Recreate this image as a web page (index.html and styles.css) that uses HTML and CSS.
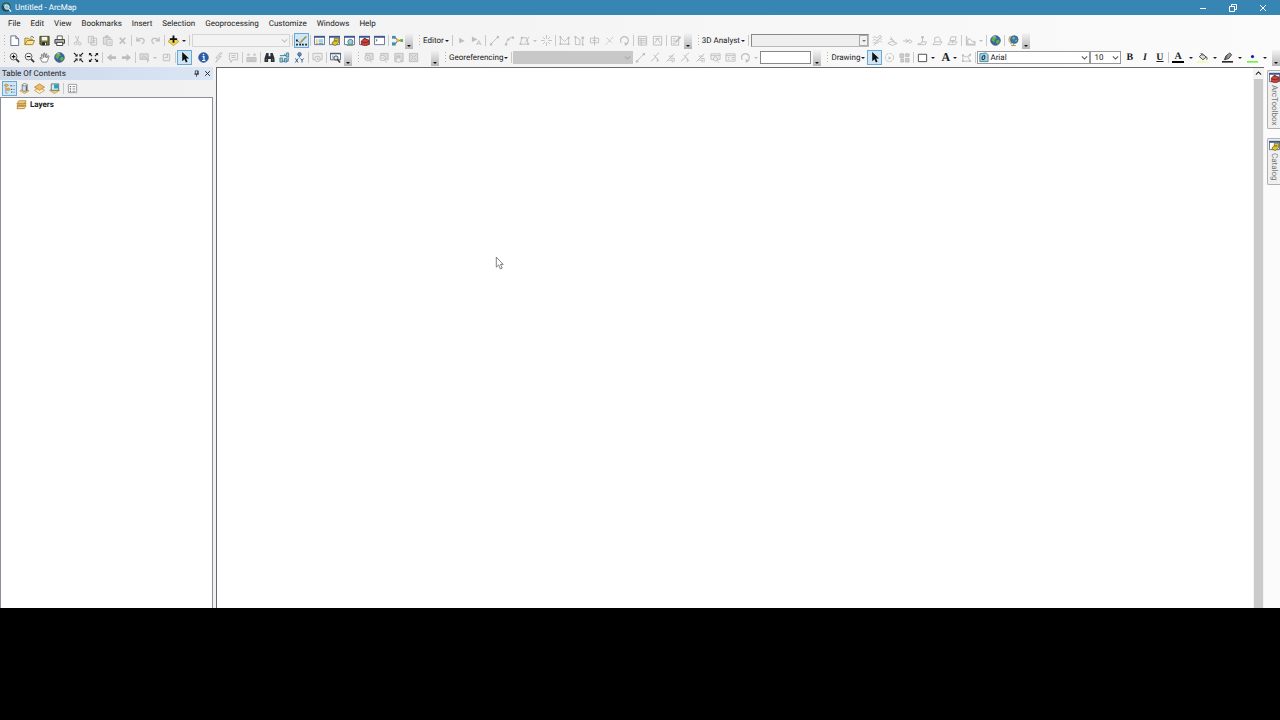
FILE: index.html
```html
<!DOCTYPE html>
<html lang="en">
<head>
    <meta charset="UTF-8">
    <meta name="viewport" content="width=device-width, initial-scale=1.0">
    <title>Untitled - ArcMap</title>
    <link rel="stylesheet" href="styles.css">
</head>
<body>
    <!-- Icon set, 12x12 grid -->
    <svg class="icon-set" aria-hidden="true">
        <symbol id="new" viewBox="0 0 12 12"><path d="M2 1h5.500l3 3v7.500H2z" fill="#fff" stroke="#5c6b86"/><path d="M7.500 1v3h3" fill="#cfdcf0" stroke="#5c6b86"/></symbol>
        <symbol id="open" viewBox="0 0 12 12"><path d="M1 10.500V3.500h3.500l1 1H9v2" fill="#f5dc82" stroke="#9a7f28"/><path d="M1 10.500l2.500-4.500h8L9.500 10.500z" fill="#ffe68c" stroke="#9a7f28"/><path d="M7 2.500c1.500-1.500 3-1 3.500.800" fill="none" stroke="#4a5568"/></symbol>
        <symbol id="save" viewBox="0 0 12 12"><path d="M1 1.500h10v9.500H2L1 10z" fill="#77763a" stroke="#3b3b22"/><path d="M3 2h6v4H3z" fill="#f4f4ec"/><path d="M3.500 8h5v3h-5z" fill="#222"/><path d="M6.500 8.500h1.300V11H6.500z" fill="#eee"/></symbol>
        <symbol id="print" viewBox="0 0 12 12"><path d="M3.500 5V1h5.500v4" fill="#fff" stroke="#555"/><path d="M1 5h10.500v4H1z" fill="#bbb" stroke="#333"/><path d="M3 8h6.500v3.500H3z" fill="#fff" stroke="#333"/><path d="M9 6.300h1.500" stroke="#c9b72a"/></symbol>
        <symbol id="cut" viewBox="0 0 12 12"><path d="M3.500 1l4 7M7.500 1L5 8" stroke="currentColor" fill="none"/><circle cx="4" cy="9" r="1.500" stroke="currentColor" fill="none"/><circle cx="8.500" cy="9.500" r="1.500" stroke="currentColor" fill="none"/></symbol>
        <symbol id="copy" viewBox="0 0 12 12"><path d="M1.500 1.500h5.500v7H1.500zM4.500 3.500h6v7.500h-6z" fill="#eee" stroke="currentColor"/><path d="M6 6h3M6 8h3" stroke="currentColor"/></symbol>
        <symbol id="paste" viewBox="0 0 12 12"><path d="M1.500 2.500h7.500V10H1.500z" fill="#ddd" stroke="currentColor"/><path d="M3.500 1.500h3.500" stroke="currentColor" stroke-width="2"/><path d="M5.500 5h5.500v6.500H5.500z" fill="#f2f2f2" stroke="currentColor"/><path d="M7 7.500h3M7 9.500h3" stroke="currentColor"/></symbol>
        <symbol id="delete" viewBox="0 0 12 12"><path d="M3 3l6 6.500M9 3L3 9.500" stroke="currentColor" stroke-width="1.800"/></symbol>
        <symbol id="undo" viewBox="0 0 12 12"><path d="M2 2.500v4h4M2.500 6C5 2.500 10 3 10 6.500 10 8 9 9 7.500 9.500" fill="none" stroke="currentColor" stroke-width="1.300"/></symbol>
        <symbol id="redo" viewBox="0 0 12 12"><path d="M10 2.500v4H6M9.500 6C7 2.500 2 3 2 6.500 2 8 3 9 4.500 9.500" fill="none" stroke="currentColor" stroke-width="1.300"/></symbol>
        <symbol id="add-data" viewBox="0 0 12 12"><path d="M0 7l6-4 6 4-6 4.500z" fill="#f5d84b" stroke="#b59320" stroke-width=".8"/><path d="M6 .5v8M2 4.500h8" stroke="#111" stroke-width="2"/></symbol>
        <symbol id="editor-bar" viewBox="0 0 12 12"><path d="M1.500 6l3 3L11 1.500" fill="none" stroke="#555" stroke-dasharray="2 1"/><path d="M5 8l6-6" stroke="#a98c4c" stroke-width="1.600"/><path d="M0 9.500h2v2H0zM3.500 9.500h2v2h-2zM6.500 9.500h2v2h-2zM10 9.500h2v2h-2zM0 5h2v2H0z" fill="#222"/></symbol>
        <symbol id="window" viewBox="0 0 12 12"><path d="M.5 1.500h11v9H.5z" fill="#fff" stroke="#5b6f94"/><path d="M0 1h12v2H0z" fill="#3b5690"/></symbol>
        <symbol id="toc" viewBox="0 0 12 12"><use href="#window"/><path d="M2 5.500h2M2 7.500h2M2 9.300h2" stroke="#d29a3a"/><path d="M5 5.500h5M5 7.500h5M5 9.300h5" stroke="#5aa0a8"/></symbol>
        <symbol id="catalog" viewBox="0 0 12 12"><use href="#window"/><path d="M3.500 8l2-1 .5-3.500h4.500v5L7 11.500 3.500 10z" fill="#e0c52a" stroke="#6d6222" stroke-width=".8"/><path d="M6 6.500h3" stroke="#554d15"/></symbol>
        <symbol id="search" viewBox="0 0 12 12"><use href="#window"/><circle cx="7" cy="7.500" r="2.800" fill="#9ccbdc" stroke="#4f7f91"/><path d="M3 11.500h7" stroke="#78a352"/></symbol>
        <symbol id="toolbox" viewBox="0 0 12 12"><use href="#window"/><path d="M2.500 6.500l3-2.500 5.500 1.500V10l-3.500 1.800-5-1.300z" fill="#c9453c" stroke="#7c1d18" stroke-width=".8"/><path d="M4.500 5c1-2 3.500-1.500 3.500.500M3 7.500l4 1 3.500-1.500" fill="none" stroke="#6a1713" stroke-width=".8"/></symbol>
        <symbol id="python" viewBox="0 0 12 12"><use href="#window"/><path d="M2 4.800l1.500 1L2 6.800" fill="none" stroke="#333" stroke-width=".8"/></symbol>
        <symbol id="model" viewBox="0 0 12 12"><path d="M2 3h2l2 3H9M2 9.500h2L6 6" fill="none" stroke="#555"/><path d="M0 1h4v3H0z" fill="#3f8fb5"/><path d="M0 8h4v3.500H0z" fill="#3f8fb5"/><path d="M5 4.500h3v3H5z" fill="#dbb83a"/><path d="M9 4.500h3v3H9z" fill="#5da348"/></symbol>
        <symbol id="play" viewBox="0 0 12 12"><path d="M3.500 3l6 3.500-6 2.500z" fill="currentColor"/></symbol>
        <symbol id="play-a" viewBox="0 0 12 12"><path d="M1 1.500l6 3.500-6 2.500z" fill="currentColor"/><path d="M6 11l2.500-5L11 11M7 9.500h3" fill="none" stroke="currentColor"/></symbol>
        <symbol id="line" viewBox="0 0 12 12"><path d="M2.500 9.500l7-7" stroke="currentColor"/><path d="M1 9h2.500v2.500H1zM8.500 1H11v2.500H8.500z" fill="currentColor"/></symbol>
        <symbol id="arc" viewBox="0 0 12 12"><path d="M2.500 10C3 5 5 3 10 2.500" fill="none" stroke="currentColor"/><path d="M1 9h2.500v2.500H1zM8.500 1.500H11v2.500H8.500zM3.500 4H6v2H3.500z" fill="currentColor"/></symbol>
        <symbol id="poly" viewBox="0 0 12 12"><path d="M1.500 10L3 3h5.500l1.500 7zM7 8l4-6" fill="none" stroke="currentColor"/><path d="M.5 9h2v2h-2zM9 9h2v2H9zM2 2h2v2H2z" fill="currentColor"/></symbol>
        <symbol id="burst" viewBox="0 0 12 12"><path d="M6 0v4M6 8v4M0 6h4M8 6h4M2 2l2.500 2.500M7.500 7.500L10 10M10 2L7.500 4.500M4.500 7.500L2 10" stroke="currentColor"/></symbol>
        <symbol id="reshape" viewBox="0 0 12 12"><path d="M1.500 2v8h9V3L6 7 1.500 2.500" fill="none" stroke="currentColor"/><path d="M.5 1h2v2h-2zM9.500 2h2v2h-2zM.5 9h2v2h-2zM9.500 9h2v2h-2z" fill="currentColor"/></symbol>
        <symbol id="cut-poly" viewBox="0 0 12 12"><path d="M1.500 10.500V2l5 3v5.500zM9.500 4v7" fill="none" stroke="currentColor"/><path d="M.5 1h2v2h-2zM8 2h3v2H8zM8.500 9.500h2v2h-2z" fill="currentColor"/></symbol>
        <symbol id="split-poly" viewBox="0 0 12 12"><path d="M1.500 3.500h9v5h-9zM6 1v10.500M4 6h4" fill="none" stroke="currentColor"/></symbol>
        <symbol id="split" viewBox="0 0 12 12"><path d="M2 10.500l8.500-9M3 3l6 6" stroke="currentColor" stroke-dasharray="3 1"/></symbol>
        <symbol id="rotate" viewBox="0 0 12 12"><path d="M2.500 8.500C0 4 4 1 7.500 2c3.500 1.500 3.500 6 .5 8" fill="none" stroke="currentColor" stroke-width="1.300"/><path d="M6 7.500L6.500 12 10 9.500z" fill="currentColor"/></symbol>
        <symbol id="grid" viewBox="0 0 12 12"><path d="M1.500 1.500h9v9.500h-9zM1.500 4h9M1.500 6.300h9M1.500 8.600h9M4.500 4v7" fill="none" stroke="currentColor"/></symbol>
        <symbol id="sketch" viewBox="0 0 12 12"><path d="M1.500 1.500h9v9.500h-9zM3 9l3-5 3 5M3.500 4h5" fill="none" stroke="currentColor"/></symbol>
        <symbol id="create" viewBox="0 0 12 12"><path d="M1.500 1.500h8v9.500h-8zM3 4h3M3 6.500h3M3 9h3" fill="none" stroke="currentColor"/><path d="M6 8l5.500-6" stroke="currentColor" stroke-width="1.800"/></symbol>
        <symbol id="contour" viewBox="0 0 12 12"><path d="M1 3c2-3 4 2 6-1s3 0 4 0M1 6c2-3 4 2 6-1s3 0 4 0M1 9c2-3 4 2 6-1s3 0 4 0M2 11.500l8-10" fill="none" stroke="currentColor"/></symbol>
        <symbol id="steep" viewBox="0 0 12 12"><path d="M1 9l4-2 6 2-5 2.500zM4 2l3 5M3 5c2-1 4 0 5 3" fill="none" stroke="currentColor"/></symbol>
        <symbol id="sight" viewBox="0 0 12 12"><path d="M1 6.500h5M4 4.500l3 2-3 2M8 5l3 2-2 2-2-2z" fill="none" stroke="currentColor"/></symbol>
        <symbol id="point-z" viewBox="0 0 12 12"><path d="M1 9.500h3l1-2h5.500L9 10.500H1zM6 2v6" fill="none" stroke="currentColor"/><circle cx="6" cy="2.500" r="1.500" fill="currentColor"/></symbol>
        <symbol id="line-z" viewBox="0 0 12 12"><path d="M1 10.500l2-3h8l-2 3zM3 7V3l4-1 2 2v3" fill="none" stroke="currentColor"/></symbol>
        <symbol id="poly-z" viewBox="0 0 12 12"><path d="M1 10.500l2-3h8l-2 3zM3 6l1.500-4H10L9 6zM6 6v3" fill="none" stroke="currentColor"/></symbol>
        <symbol id="profile" viewBox="0 0 12 12"><path d="M1.500 1v10h10M3 10V6l2-2 3 3h3v3z" fill="#ddd" stroke="currentColor"/></symbol>
        <symbol id="globe" viewBox="0 0 12 12"><circle cx="6" cy="6" r="5.200" fill="#3767a4" stroke="#263f66" stroke-width=".8"/><path d="M1.500 6c0-3 3-4.500 5-4l1 2-2 1-1 3zM7 6l3-1 .5 2.500L8 10 6.500 8z" fill="#5fb04a"/><path d="M3 2.500q1.500-1 3-.700" stroke="#b8dcec" fill="none"/></symbol>
        <symbol id="arc-globe" viewBox="0 0 12 12"><path d="M3 1C0 3.500.500 8.500 4.500 10M6 10v1.500M3.500 11.500h5" fill="none" stroke="#b38e25"/><circle cx="6.800" cy="5" r="4.200" fill="#3978b6" stroke="#275484" stroke-width=".8"/><path d="M4 4l2-2.500 2 1.500-1.500 2zM7.500 6l2.500-1-1 3z" fill="#7fbf5c"/></symbol>
        <symbol id="zoom-in" viewBox="0 0 12 12"><path d="M7.500 7.500l3.500 3.500" stroke="#333" stroke-width="1.800"/><circle cx="5" cy="5" r="3.700" fill="#f5f9fc" stroke="#555"/><path d="M5 3v4M3 5h4" stroke="#111" stroke-width="1.200"/></symbol>
        <symbol id="zoom-out" viewBox="0 0 12 12"><path d="M7.500 7.500l3.500 3.500" stroke="#333" stroke-width="1.800"/><circle cx="5" cy="5" r="3.700" fill="#f5f9fc" stroke="#555"/><path d="M3 5h4" stroke="#111" stroke-width="1.200"/></symbol>
        <symbol id="pan" viewBox="0 0 12 12"><path d="M3.500 11L1 6.500l1-.5 1.500 1.500-1-4.500 1-.5L5 6V1.500l1-.5.800 5L7.500 2h1v4.500L10 4l1 .5-1.500 4.500L8.500 11z" fill="#fff" stroke="#666" stroke-width=".8"/></symbol>
        <symbol id="fixed-in" viewBox="0 0 12 12"><path d="M1 1l3 3M11 1L8 4M1 11l3-3M11 11L8 8" stroke="#222" stroke-width="1.300"/><path d="M5 2v3H2zM7 2v3h3zM5 10V7H2zM7 10V7h3z" fill="#222"/></symbol>
        <symbol id="fixed-out" viewBox="0 0 12 12"><path d="M2 2l2.500 2.500M10 2L7.500 4.500M2 10l2.500-2.500M10 10L7.500 7.500" stroke="#222" stroke-width="1.300"/><path d="M1 1h3L1 4zM11 1H8l3 3zM1 11h3L1 8zM11 11H8l3-3z" fill="#222"/></symbol>
        <symbol id="back" viewBox="0 0 12 12"><path d="M1 6l5-4v2.500h5v3H6V10z" fill="currentColor"/></symbol>
        <symbol id="forward" viewBox="0 0 12 12"><path d="M11 6L6 2v2.500H1v3h5V10z" fill="currentColor"/></symbol>
        <symbol id="select-feat" viewBox="0 0 12 12"><path d="M1 2h9v6H1z" fill="#ddd" stroke="currentColor"/><path d="M3 8l2-4 3 3M6 5l5 4-2 .5.5 2" fill="none" stroke="currentColor"/></symbol>
        <symbol id="clear-sel" viewBox="0 0 12 12"><path d="M2.500 2.500h7v7h-7zM7 2.500V6H4" fill="#eee" stroke="currentColor"/></symbol>
        <symbol id="arrow" viewBox="0 0 12 12"><path d="M3.500 0v10L6 7.800l1.500 3.700 1.800-.8L7.800 7.200H11z" fill="#111"/></symbol>
        <symbol id="info" viewBox="0 0 12 12"><circle cx="6" cy="6" r="5.200" fill="#2860ad" stroke="#1c3f77" stroke-width=".8"/><path d="M5 5h1.500v4M4.500 9.200h3.500" stroke="#fff" stroke-width="1.200" fill="none"/><circle cx="6" cy="2.800" r=".9" fill="#fff"/></symbol>
        <symbol id="bolt" viewBox="0 0 12 12"><path d="M7.500 1L3 6.500h2.500L3 11.500 9 5H6.500L10 1z" fill="#e5e5e5" stroke="currentColor" stroke-width=".8"/></symbol>
        <symbol id="popup" viewBox="0 0 12 12"><path d="M1.500 1.500h9v7H5l-2 3v-3H1.500zM3.500 4h5M3.500 6h5" fill="none" stroke="currentColor"/></symbol>
        <symbol id="measure" viewBox="0 0 12 12"><path d="M1 6h10v4.500H1z" fill="#ccc" stroke="currentColor"/><path d="M1.500 3h3M7.500 3h3M3 1.500L1.500 3 3 4.500M9 1.500L10.500 3 9 4.500M4 8v2M6 8v2M8 8v2" fill="none" stroke="currentColor"/></symbol>
        <symbol id="find" viewBox="0 0 12 12"><path d="M2.500 1h2.500v3.500h2V1h2.500L11.500 7v4h-4V7.500h-3V11h-4V7z" fill="#2b3138"/><path d="M2 8.500h1M9 8.500h1" stroke="#aaa"/></symbol>
        <symbol id="route" viewBox="0 0 12 12"><path d="M1 4h6.500M5.500 2l2 2M10 6v4H3" fill="none" stroke="#2a7290"/><path d="M8 1h2.500v4.500H8zM1 6.500h3V11H1zM6 7h2.500v4H6z" fill="#9ec7d8" stroke="#2a7290" stroke-width=".8"/></symbol>
        <symbol id="xy" viewBox="0 0 12 12"><circle cx="6" cy="2.500" r="2" fill="#5c91c5" stroke="#31588a" stroke-width=".7"/><path d="M6 4v2M1.500 7l3 4.500M4.500 7l-3 4.500M7 7l1.800 2L10.500 7M8.800 9v2.500" fill="none" stroke="#29558d"/></symbol>
        <symbol id="time" viewBox="0 0 12 12"><path d="M1 1.500h10v7H1z" fill="#eee" stroke="currentColor"/><circle cx="6" cy="7.500" r="3" fill="#eee" stroke="currentColor"/><path d="M6 6v2h1.500" fill="none" stroke="currentColor"/></symbol>
        <symbol id="viewer" viewBox="0 0 12 12"><path d="M.5 1.500h11v7H.5z" fill="#fff" stroke="#4c5d7c"/><path d="M0 1h12v1.500H0z" fill="#4c5d7c"/><path d="M2 4.500h2M2 6.500h2" stroke="#888"/><circle cx="6.500" cy="6.500" r="2.300" fill="#d7e7f2" stroke="#444"/><path d="M8 8l3 3.500" stroke="#333" stroke-width="1.500"/></symbol>
        <symbol id="page-in" viewBox="0 0 12 12"><path d="M3 1.500h8v7H3z" fill="#ddd" stroke="currentColor"/><circle cx="5" cy="6.500" r="3" fill="#eee" stroke="currentColor"/><path d="M3.500 6.500h3M5 5v3M7 9l2.500 2.500" stroke="currentColor"/></symbol>
        <symbol id="page-out" viewBox="0 0 12 12"><path d="M3 1.500h8v7H3z" fill="#ddd" stroke="currentColor"/><circle cx="5" cy="6.500" r="3" fill="#eee" stroke="currentColor"/><path d="M3.500 6.500h3M7 9l2.500 2.500" stroke="currentColor"/></symbol>
        <symbol id="page-pan" viewBox="0 0 12 12"><path d="M2 1.500h9v9H2z" fill="#ddd" stroke="currentColor"/><path d="M4 11L2 7l2 1V4l1.500 3V3.500L7 7V4l2 3-1 4z" fill="#eee" stroke="currentColor" stroke-width=".8"/></symbol>
        <symbol id="page-full" viewBox="0 0 12 12"><path d="M1.500 1.500h9v9h-9z" fill="#ddd" stroke="currentColor"/><path d="M3 3l2.500 2.500M9 3L6.500 5.500M3 9l2.500-2.500M9 9L6.500 6.500" stroke="currentColor"/></symbol>
        <symbol id="control" viewBox="0 0 12 12"><path d="M1 10l4-3 2-4 3-2M4 3l6 7M8 7v4" fill="none" stroke="currentColor"/></symbol>
        <symbol id="auto-reg" viewBox="0 0 12 12"><path d="M1.500 10.500L10 2M4 4.500h5M6 7h4v4M4 9h4v2.500" fill="none" stroke="currentColor"/></symbol>
        <symbol id="link-table" viewBox="0 0 12 12"><path d="M1 2h10v8H1zM1 4h10M3 6h2M3 8h2M7 6h3M7 8h3" fill="none" stroke="currentColor"/></symbol>
        <symbol id="link-find" viewBox="0 0 12 12"><path d="M1 2h10v6H1zM1 4h10" fill="none" stroke="currentColor"/><circle cx="6" cy="7.500" r="2.300" fill="#eee" stroke="currentColor"/><path d="M7.500 9l2 2.500" stroke="currentColor"/></symbol>
        <symbol id="rotate-el" viewBox="0 0 12 12"><circle cx="6" cy="6" r="4.500" fill="none" stroke="currentColor" stroke-dasharray="3 1"/><path d="M5 4.500v4l3-2z" fill="currentColor"/></symbol>
        <symbol id="align" viewBox="0 0 12 12"><path d="M1 2h4v4H1zM7 2h4v3H7zM2 7.500h3V11H2zM7 7h4v4H7z" fill="#ccc" stroke="currentColor"/></symbol>
        <symbol id="rect" viewBox="0 0 12 12"><path d="M1.500 2.500h9v8h-9z" fill="#fff" stroke="#444"/></symbol>
        <symbol id="vertices" viewBox="0 0 12 12"><path d="M2 10V4l4 1.500L10 3 8 6l2 4z" fill="none" stroke="currentColor"/><path d="M1 2.500h2v2H1zM9 2h2v2H9zM1 9h2v2H1zM9 9h2v2H9z" fill="currentColor"/></symbol>
        <symbol id="fill" viewBox="0 0 12 12"><path d="M2.500 5L6 2l4 3.500-3.500 3z" fill="#ddd" stroke="#444"/><path d="M4 1l2.500 3M9.500 5c1.500.500 2 2 1 3.500" fill="none" stroke="#444"/><path d="M0 10h12v1.500H0z" fill="#f6f7a0"/></symbol>
        <symbol id="pen" viewBox="0 0 12 12"><path d="M3 8.500l1-4L8.500 1l2 2-3 4z" fill="#999" stroke="#333" stroke-width=".9"/><path d="M2 8.500l4-4" stroke="#333"/><path d="M0 10h12v1.500H0z" fill="#000"/></symbol>
        <symbol id="marker" viewBox="0 0 12 12"><circle cx="6" cy="5" r="1.700" fill="#1c1c9c"/><path d="M0 10h12v1.500H0z" fill="#55f01c"/></symbol>
        <symbol id="chevron" viewBox="0 0 12 12"><path d="M2.500 4.500L6 8l3.500-3.500" fill="none" stroke="currentColor" stroke-width="1.400"/></symbol>
        <symbol id="font-tag" viewBox="0 0 12 12"><path d="M2 2l7-1 2 2v7.500H2z" fill="#a9d3e3" stroke="#46859c"/><path d="M7.500 3.500C4 4 3.500 8 5.500 8.500 7.500 8 8 5 7 4" fill="none" stroke="#173f55" stroke-width="1.200"/></symbol>
        <symbol id="list-draw" viewBox="0 0 12 12"><path d="M0 2.500l2.500-1.500L5 2.500 2.500 4zM2 7l2.500-1.500L7 7 4.500 8.500z" fill="#e8b24c" stroke="#bb8327" stroke-width=".7"/><path d="M2 4v7h2" fill="none" stroke="#999"/><path d="M7 3h1.500M8 7h1M8 10h1" stroke="#333" stroke-width="1.300"/><path d="M9.500 3H12M10 7h2M10 10h2" stroke="#7a9cb9"/></symbol>
        <symbol id="list-source" viewBox="0 0 12 12"><path d="M1 8.500L6 6l5 2.500L6 11.500z" fill="#f4cf77" stroke="#b98e3b" stroke-width=".7"/><path d="M3.500 2v6c1 1.300 4.500 1.300 5.500 0V2z" fill="#d7dde8" stroke="#5e6a7c" stroke-width=".8"/><ellipse cx="6.200" cy="2" rx="2.700" ry="1.200" fill="#fff" stroke="#5e6a7c" stroke-width=".8"/><path d="M8 3.500v5" stroke="#3d485a"/></symbol>
        <symbol id="list-visible" viewBox="0 0 12 12"><path d="M.5 8L6 5l5.500 3L6 11.500z" fill="#fff4d6" stroke="#b98e3b" stroke-width=".8"/><path d="M.5 4.500L6 1l5.500 3.500L6 8z" fill="#efbc62" stroke="#b47c25" stroke-width=".8"/></symbol>
        <symbol id="list-select" viewBox="0 0 12 12"><path d="M.5 8L6 5.500 11.500 8 6 11.500z" fill="#f4cf77" stroke="#b98e3b" stroke-width=".8"/><path d="M2.500 1h8v7h-8z" fill="#d6eef5" stroke="#5b7181"/><path d="M5.500 1.500H10V6H5.500z" fill="#28a3b6"/></symbol>
        <symbol id="options" viewBox="0 0 12 12"><path d="M1.500 1.500h9v9h-9z" fill="#fff" stroke="#9b9b9b"/><path d="M3 4h1.500M3 6.500h1.500M3 9h1.500" stroke="#333"/><path d="M6 4h3M6 6.500h3M6 9h3" stroke="#789"/></symbol>
        <symbol id="layers" viewBox="0 0 12 12"><path d="M1 10.500l2-3.500h8l-2 3.500zM1 8l2-3.500h8L9 8zM1 5.500L3 2h8L9 5.500z" fill="#fbe3ad" stroke="#b8862f"/></symbol>
        <symbol id="pin" viewBox="0 0 12 12"><path d="M4 1.500h5V7H4zM2 7h8M6 7v4.500M8 2v5" fill="none" stroke="#222" stroke-width="1.200"/></symbol>
        <symbol id="cross" viewBox="0 0 12 12"><path d="M2 2l8 8M10 2l-8 8" stroke="currentColor" stroke-width="1.600"/></symbol>
        <symbol id="close" viewBox="0 0 12 12"><path d="M3 3l6 6M9 3L3 9" stroke="currentColor"/></symbol>
        <symbol id="minimize" viewBox="0 0 12 12"><path d="M3 6.500h6" stroke="currentColor"/></symbol>
        <symbol id="restore" viewBox="0 0 12 12"><path d="M2.500 4.500h5v5h-5zM4.500 4V2.500h5v5H8" fill="none" stroke="currentColor"/></symbol>
        <symbol id="app" viewBox="0 0 12 12"><circle cx="5.500" cy="5.500" r="5" fill="#1c4b5a"/><path d="M2 4c1-2 3-3 5-2L6 4 4 5zM6 6l3-1v3z" fill="#59a588"/><circle cx="6.500" cy="5.500" r="2.500" fill="#8fc6d8" stroke="#e8f2f5"/><path d="M8.500 7.500l2.500 3" stroke="#f1f6f8" stroke-width="1.500"/></symbol>
        <symbol id="cursor" viewBox="0 0 12 16"><path d="M2.500 1v11L5 9.500 7 14l2-1-2-4h3z" fill="#fff" stroke="#555" stroke-width=".8"/></symbol>
    </svg>

    <div class="app">
        <header class="title-bar">
            <svg class="icon"><use href="#app"/></svg>
            <h1>Untitled - ArcMap</h1>
            <div class="window-controls">
                <button title="Minimize"><svg class="icon"><use href="#minimize"/></svg></button>
                <button title="Restore"><svg class="icon"><use href="#restore"/></svg></button>
                <button title="Close"><svg class="icon"><use href="#close"/></svg></button>
            </div>
        </header>

        <nav class="menu-bar">
            <button>File</button>
            <button>Edit</button>
            <button>View</button>
            <button>Bookmarks</button>
            <button>Insert</button>
            <button>Selection</button>
            <button>Geoprocessing</button>
            <button>Customize</button>
            <button>Windows</button>
            <button>Help</button>
        </nav>

        <div class="toolbar-row">
            <!-- Standard -->
            <div class="toolbar standard">
                <button class="tool" title="New"><svg class="icon"><use href="#new"/></svg></button>
                <button class="tool" title="Open"><svg class="icon"><use href="#open"/></svg></button>
                <button class="tool" title="Save"><svg class="icon"><use href="#save"/></svg></button>
                <button class="tool" title="Print"><svg class="icon"><use href="#print"/></svg></button>
                <span class="sep"></span>
                <button class="tool" title="Cut" disabled><svg class="icon"><use href="#cut"/></svg></button>
                <button class="tool" title="Copy" disabled><svg class="icon"><use href="#copy"/></svg></button>
                <button class="tool" title="Paste" disabled><svg class="icon"><use href="#paste"/></svg></button>
                <button class="tool" title="Delete" disabled><svg class="icon"><use href="#delete"/></svg></button>
                <span class="sep"></span>
                <button class="tool" title="Undo" disabled><svg class="icon"><use href="#undo"/></svg></button>
                <button class="tool" title="Redo" disabled><svg class="icon"><use href="#redo"/></svg></button>
                <span class="sep"></span>
                <button class="tool drop" title="Add Data"><svg class="icon"><use href="#add-data"/></svg></button>
                <span class="sep"></span>
                <span class="combo scale"><select aria-label="Map Scale" disabled></select><svg class="icon"><use href="#chevron"/></svg></span>
                <span class="sep"></span>
                <button class="tool active" title="Editor Toolbar"><svg class="icon"><use href="#editor-bar"/></svg></button>
                <span class="sep"></span>
                <button class="tool" title="Table Of Contents"><svg class="icon"><use href="#toc"/></svg></button>
                <button class="tool" title="Catalog"><svg class="icon"><use href="#catalog"/></svg></button>
                <button class="tool" title="Search"><svg class="icon"><use href="#search"/></svg></button>
                <button class="tool" title="ArcToolbox"><svg class="icon"><use href="#toolbox"/></svg></button>
                <button class="tool" title="Python"><svg class="icon"><use href="#python"/></svg></button>
                <span class="sep"></span>
                <button class="tool" title="ModelBuilder"><svg class="icon"><use href="#model"/></svg></button>
                <button class="overflow" title="Toolbar Options"></button>
            </div>

            <!-- Editor -->
            <div class="toolbar">
                <button class="tool-menu">Editor</button>
                <span class="sep"></span>
                <button class="tool" title="Edit Tool" disabled><svg class="icon"><use href="#play"/></svg></button>
                <button class="tool" title="Edit Annotation" disabled><svg class="icon"><use href="#play-a"/></svg></button>
                <span class="sep"></span>
                <button class="tool" title="Straight Segment" disabled><svg class="icon"><use href="#line"/></svg></button>
                <button class="tool" title="Arc Segment" disabled><svg class="icon"><use href="#arc"/></svg></button>
                <button class="tool drop" title="Trace" disabled><svg class="icon"><use href="#poly"/></svg></button>
                <button class="tool" title="Point" disabled><svg class="icon"><use href="#burst"/></svg></button>
                <span class="sep"></span>
                <button class="tool" title="Edit Vertices" disabled><svg class="icon"><use href="#reshape"/></svg></button>
                <button class="tool" title="Reshape" disabled><svg class="icon"><use href="#cut-poly"/></svg></button>
                <button class="tool" title="Cut Polygons" disabled><svg class="icon"><use href="#split-poly"/></svg></button>
                <button class="tool" title="Split" disabled><svg class="icon"><use href="#split"/></svg></button>
                <button class="tool" title="Rotate" disabled><svg class="icon"><use href="#rotate"/></svg></button>
                <span class="sep"></span>
                <button class="tool" title="Attributes" disabled><svg class="icon"><use href="#grid"/></svg></button>
                <button class="tool" title="Sketch Properties" disabled><svg class="icon"><use href="#sketch"/></svg></button>
                <span class="sep"></span>
                <button class="tool" title="Create Features" disabled><svg class="icon"><use href="#create"/></svg></button>
                <button class="overflow" title="Toolbar Options"></button>
            </div>

            <!-- 3D Analyst -->
            <div class="toolbar">
                <button class="tool-menu">3D Analyst</button>
                <span class="sep"></span>
                <span class="combo surface"><select aria-label="Surface layer" disabled></select><i class="box-arrow"></i></span>
                <button class="tool" title="Contour" disabled><svg class="icon"><use href="#contour"/></svg></button>
                <button class="tool" title="Steepest Path" disabled><svg class="icon"><use href="#steep"/></svg></button>
                <button class="tool" title="Line of Sight" disabled><svg class="icon"><use href="#sight"/></svg></button>
                <button class="tool" title="Interpolate Point" disabled><svg class="icon"><use href="#point-z"/></svg></button>
                <button class="tool" title="Interpolate Line" disabled><svg class="icon"><use href="#line-z"/></svg></button>
                <button class="tool" title="Interpolate Polygon" disabled><svg class="icon"><use href="#poly-z"/></svg></button>
                <span class="sep"></span>
                <button class="tool drop" title="Profile Graph" disabled><svg class="icon"><use href="#profile"/></svg></button>
                <span class="sep"></span>
                <button class="tool" title="ArcScene"><svg class="icon"><use href="#globe"/></svg></button>
                <span class="sep"></span>
                <button class="tool" title="ArcGlobe"><svg class="icon"><use href="#arc-globe"/></svg></button>
                <button class="overflow" title="Toolbar Options"></button>
            </div>
        </div>

        <div class="toolbar-row">
            <!-- Tools -->
            <div class="toolbar">
                <button class="tool" title="Zoom In"><svg class="icon"><use href="#zoom-in"/></svg></button>
                <button class="tool" title="Zoom Out"><svg class="icon"><use href="#zoom-out"/></svg></button>
                <button class="tool" title="Pan"><svg class="icon"><use href="#pan"/></svg></button>
                <button class="tool" title="Full Extent"><svg class="icon"><use href="#globe"/></svg></button>
                <span class="sep blank"></span>
                <button class="tool" title="Fixed Zoom In"><svg class="icon"><use href="#fixed-in"/></svg></button>
                <button class="tool" title="Fixed Zoom Out"><svg class="icon"><use href="#fixed-out"/></svg></button>
                <span class="sep"></span>
                <button class="tool" title="Previous Extent" disabled><svg class="icon"><use href="#back"/></svg></button>
                <button class="tool" title="Next Extent" disabled><svg class="icon"><use href="#forward"/></svg></button>
                <span class="sep"></span>
                <button class="tool drop" title="Select Features" disabled><svg class="icon"><use href="#select-feat"/></svg></button>
                <button class="tool" title="Clear Selected Features" disabled><svg class="icon"><use href="#clear-sel"/></svg></button>
                <span class="sep"></span>
                <button class="tool active" title="Select Elements"><svg class="icon"><use href="#arrow"/></svg></button>
                <span class="sep blank"></span>
                <button class="tool" title="Identify"><svg class="icon"><use href="#info"/></svg></button>
                <button class="tool" title="Hyperlink" disabled><svg class="icon"><use href="#bolt"/></svg></button>
                <button class="tool" title="HTML Popup" disabled><svg class="icon"><use href="#popup"/></svg></button>
                <span class="sep"></span>
                <button class="tool" title="Measure" disabled><svg class="icon"><use href="#measure"/></svg></button>
                <span class="sep"></span>
                <button class="tool" title="Find"><svg class="icon"><use href="#find"/></svg></button>
                <button class="tool" title="Find Route"><svg class="icon"><use href="#route"/></svg></button>
                <button class="tool" title="Go To XY"><svg class="icon"><use href="#xy"/></svg></button>
                <span class="sep"></span>
                <button class="tool" title="Time Slider" disabled><svg class="icon"><use href="#time"/></svg></button>
                <span class="sep"></span>
                <button class="tool" title="Create Viewer Window"><svg class="icon"><use href="#viewer"/></svg></button>
                <button class="overflow" title="Toolbar Options"></button>
            </div>

            <!-- Layout -->
            <div class="toolbar layout">
                <button class="tool" title="Page Zoom In" disabled><svg class="icon"><use href="#page-in"/></svg></button>
                <button class="tool" title="Page Zoom Out" disabled><svg class="icon"><use href="#page-out"/></svg></button>
                <button class="tool" title="Page Pan" disabled><svg class="icon"><use href="#page-pan"/></svg></button>
                <button class="tool" title="Zoom Whole Page" disabled><svg class="icon"><use href="#page-full"/></svg></button>
                <button class="overflow" title="Toolbar Options"></button>
            </div>

            <!-- Georeferencing -->
            <div class="toolbar">
                <button class="tool-menu">Georeferencing</button>
                <span class="sep"></span>
                <span class="combo raster"><select aria-label="Raster layer" disabled></select><svg class="icon"><use href="#chevron"/></svg></span>
                <button class="tool" title="Add Control Points" disabled><svg class="icon"><use href="#line"/></svg></button>
                <button class="tool" title="Auto Registration" disabled><svg class="icon"><use href="#control"/></svg></button>
                <button class="tool" title="Select Link" disabled><svg class="icon"><use href="#auto-reg"/></svg></button>
                <button class="tool" title="Zoom To Link" disabled><svg class="icon"><use href="#control"/></svg></button>
                <button class="tool" title="Delete Link" disabled><svg class="icon"><use href="#auto-reg"/></svg></button>
                <button class="tool" title="Viewer" disabled><svg class="icon"><use href="#link-find"/></svg></button>
                <button class="tool" title="View Link Table" disabled><svg class="icon"><use href="#link-table"/></svg></button>
                <button class="tool drop" title="Rotate Raster" disabled><svg class="icon"><use href="#rotate"/></svg></button>
                <input class="angle" type="text" aria-label="Rotation value">
                <button class="overflow" title="Toolbar Options"></button>
            </div>

            <!-- Drawing -->
            <div class="toolbar drawing">
                <button class="tool-menu">Drawing</button>
                <button class="tool active" title="Select Elements"><svg class="icon"><use href="#arrow"/></svg></button>
                <button class="tool" title="Rotate Element" disabled><svg class="icon"><use href="#rotate-el"/></svg></button>
                <button class="tool" title="Zoom To Selected Elements" disabled><svg class="icon"><use href="#align"/></svg></button>
                <span class="sep"></span>
                <button class="tool drop" title="Rectangle"><svg class="icon"><use href="#rect"/></svg></button>
                <button class="tool drop letter" title="Text">A</button>
                <button class="tool" title="Edit Vertices" disabled><svg class="icon"><use href="#vertices"/></svg></button>
                <span class="sep"></span>
                <span class="combo font"><svg class="icon tag"><use href="#font-tag"/></svg><select aria-label="Font"><option>Arial</option></select><svg class="icon"><use href="#chevron"/></svg></span>
                <span class="combo size"><select aria-label="Font size"><option>10</option></select><svg class="icon"><use href="#chevron"/></svg></span>
                <button class="tool letter bold" title="Bold">B</button>
                <button class="tool letter italic" title="Italic">I</button>
                <button class="tool letter underline" title="Underline">U</button>
                <span class="sep"></span>
                <button class="tool drop color letter" title="Font Color"><span>A</span></button>
                <button class="tool drop color" title="Fill Color"><svg class="icon"><use href="#fill"/></svg></button>
                <button class="tool drop color" title="Line Color"><svg class="icon"><use href="#pen"/></svg></button>
                <button class="tool drop color" title="Marker Color"><svg class="icon"><use href="#marker"/></svg></button>
                <button class="overflow" title="Toolbar Options"></button>
            </div>
        </div>

        <main class="workspace">
            <aside class="contents">
                <div class="panel-header">
                    <h2>Table Of Contents</h2>
                    <button title="Auto Hide"><svg class="icon"><use href="#pin"/></svg></button>
                    <button title="Close"><svg class="icon"><use href="#cross"/></svg></button>
                </div>
                <div class="panel-tools">
                    <button class="tool active" title="List By Drawing Order"><svg class="icon"><use href="#list-draw"/></svg></button>
                    <button class="tool" title="List By Source"><svg class="icon"><use href="#list-source"/></svg></button>
                    <button class="tool" title="List By Visibility"><svg class="icon"><use href="#list-visible"/></svg></button>
                    <button class="tool" title="List By Selection"><svg class="icon"><use href="#list-select"/></svg></button>
                    <span class="sep"></span>
                    <button class="tool" title="Options"><svg class="icon"><use href="#options"/></svg></button>
                </div>
                <ul class="tree">
                    <li><svg class="icon"><use href="#layers"/></svg>Layers</li>
                </ul>
            </aside>

            <section class="map" aria-label="Map">
                <svg class="pointer"><use href="#cursor"/></svg>
            </section>

            <div class="scrollbar">
                <button title="Scroll Up"><svg class="icon"><use href="#chevron"/></svg></button>
                <div class="thumb"></div>
            </div>

            <div class="dock-tabs">
                <button><svg class="icon"><use href="#toolbox"/></svg>ArcToolbox</button>
                <button><svg class="icon"><use href="#catalog"/></svg>Catalog</button>
            </div>
        </main>
    </div>
</body>
</html>
```

FILE: styles.css
```css
* {
    box-sizing: border-box;
}

body {
    margin: 0;
    height: 100vh;
    padding-bottom: 112px;
    background: #000;
    font-family: Roboto, 'Open Sans', sans-serif;
    font-size: 8px;
    text-rendering: geometricPrecision;
    color: #222;
    overflow: hidden;
}

button,
select,
input {
    font: inherit;
    text-rendering: inherit;
    color: inherit;
    margin: 0;
    padding: 0;
    border: none;
    border-radius: 0;
    background: none;
}

h1,
h2 {
    margin: 0;
    font-size: inherit;
    font-weight: normal;
}

.icon-set {
    display: none;
}

.icon {
    display: block;
    flex: none;
    width: 11px;
    height: 11px;
}

.app {
    display: flex;
    flex-direction: column;
    height: 100%;
    background: linear-gradient(90deg, #f0f0f0, #fbfbfb);
    overflow: hidden;
}

/* Title bar */
.title-bar {
    display: flex;
    align-items: center;
    flex: none;
    height: 15px;
    padding: 0 2px 0 1px;
    background: #3685b3;
    color: #fff;
}

.title-bar h1 {
    flex: 1;
    margin-left: 3px;
}

.window-controls {
    display: flex;
}

.window-controls button {
    width: 30px;
    display: flex;
    justify-content: center;
}

.window-controls .icon {
    width: 12px;
    height: 12px;
}

/* Menu bar */
.menu-bar {
    display: flex;
    flex: none;
    height: 17px;
    padding-left: 3px;
}

.menu-bar button {
    padding: 0 5px;
}

/* Toolbars */
.toolbar-row {
    display: flex;
    flex: none;
    height: 17px;
}

.toolbar {
    display: flex;
    align-items: center;
    padding-right: 3px;
}

.toolbar::before {
    content: "";
    width: 2px;
    height: 11px;
    margin: 0 1px 0 3px;
    background: repeating-linear-gradient(#b4b4b4 0 1px, transparent 1px 3px);
    background-size: 1px 100%;
    background-repeat: no-repeat;
}

.toolbar:first-child::before {
    margin-left: 4px;
}

.tool {
    display: flex;
    align-items: center;
    justify-content: center;
    flex: none;
    width: 15px;
    height: 15px;
}

.tool:disabled,
.combo select:disabled + .icon {
    color: #bdbdbd;
}

.tool.active {
    border: 1px solid #6aa9d6;
    background: #cfe6f7;
}

.tool.drop {
    width: 22px;
    justify-content: flex-start;
    padding-left: 2px;
}

.drop::after,
.tool-menu::after {
    content: "";
    margin-left: 3px;
    border: 2px solid transparent;
    border-top-color: currentColor;
    border-bottom: none;
}

.tool-menu {
    display: flex;
    align-items: center;
    padding: 0 2px 0 1px;
}

.tool-menu::after {
    margin-left: 1px;
}

.sep {
    width: 1px;
    height: 11px;
    margin: 0 1px;
    background: #c9c9c9;
}

.sep.blank {
    margin-right: 2px;
    background: none;
}

.overflow {
    align-self: flex-end;
    display: flex;
    justify-content: center;
    align-items: flex-end;
    width: 8px;
    height: 16px;
    margin-left: 1px;
    padding-bottom: 2px;
    background: linear-gradient(#f4f4f4, #b5b5b5);
}

.overflow::after {
    content: "";
    border: 2px solid transparent;
    border-top-color: #111;
    border-bottom: none;
}

.standard .overflow {
    margin-left: 0;
}

.layout .overflow {
    margin-left: 10px;
}

.drawing {
    flex: 1;
    padding-right: 0;
}

.drawing .overflow {
    margin-left: auto;
}

/* Drop-downs and text boxes */
.combo {
    position: relative;
    height: 13px;
}

.combo select {
    display: block;
    appearance: none;
    width: 100%;
    height: 100%;
    padding-left: 3px;
    border: 1px solid #999;
    background: #fff;
    opacity: 1;
}

.combo .icon {
    position: absolute;
    top: 2px;
    right: 1px;
    width: 9px;
    height: 9px;
    color: #555;
}

.combo .tag {
    top: 1px;
    left: 1px;
    right: auto;
    width: 11px;
    height: 11px;
}

.scale {
    width: 98px;
    margin: 0 1px;
}

.scale select {
    border-color: #d5d5d5;
    background: #f3f3f3;
}

.surface {
    width: 118px;
    margin: 0 1px;
}

.surface select {
    border-color: #888 #bbb #bbb #888;
    background: #eee;
}

.box-arrow {
    position: absolute;
    top: 1px;
    right: 1px;
    width: 9px;
    height: 11px;
    border: 1px solid #aaa;
    background: #f2f2f2;
}

.box-arrow::after {
    content: "";
    position: absolute;
    top: 4px;
    left: 2px;
    border: 2px solid transparent;
    border-top-color: #777;
    border-bottom: none;
}

.raster {
    width: 120px;
}

.raster select {
    border-color: #c8c8c8;
    background: #c8c8c8;
}

.raster select:disabled + .icon {
    color: #aaa;
}

.font {
    width: 113px;
}

.font select {
    padding-left: 12px;
}

.size {
    width: 31px;
    margin-right: 1px;
}

.angle {
    width: 51px;
    height: 13px;
    margin-right: 1px;
    border: 1px solid #888;
    background: #fff;
}

/* Letter buttons of the drawing toolbar */
.letter {
    font-family: 'Liberation Serif', serif;
    font-size: 10px;
    font-weight: bold;
}

.drop.letter {
    padding-left: 4px;
    font-size: 12px;
}

.italic {
    font-style: italic;
}

.underline {
    text-decoration: underline;
}

.tool.color {
    width: 25px;
    padding-left: 2px;
}

.color::after {
    margin-left: 5px;
}

.color span {
    height: 11px;
    line-height: 9px;
    border-bottom: 2px solid #000;
    font-size: 10px;
    padding: 0 2px;
}

/* Workspace */
.workspace {
    display: flex;
    flex: 1;
    min-height: 0;
    margin-top: 1px;
}

.contents {
    display: flex;
    flex-direction: column;
    width: 213px;
    margin-right: 3px;
}

.panel-header {
    display: flex;
    align-items: center;
    height: 13px;
    padding: 0 0 0 2px;
    background: linear-gradient(90deg, #ccd8e8, #dae6f5);
}

.panel-header h2 {
    flex: 1;
}

.panel-header button {
    padding: 0 2px;
}

.panel-header .icon {
    width: 7px;
    height: 7px;
}

.panel-tools {
    display: flex;
    align-items: center;
    height: 17px;
    padding-left: 2px;
}

.tree {
    flex: 1;
    margin: 0;
    padding: 1px 0 0 15px;
    list-style: none;
    border: 1px solid #8a8f99;
    border-bottom: none;
    background: #fff;
    font-weight: bold;
}

.tree li {
    display: flex;
    align-items: center;
    gap: 3px;
}

.map {
    position: relative;
    flex: 1;
    border: 1px solid #696969;
    border-width: 1px 0 0 1px;
    background: #fff;
}

.pointer {
    position: absolute;
    left: 277px;
    top: 188px;
    width: 11px;
    height: 15px;
}

.scrollbar {
    display: flex;
    flex-direction: column;
    width: 11px;
    padding: 0 1px;
    border-top: 1px solid #696969;
    background: #f3f3f3;
}

.scrollbar button {
    height: 11px;
    transform: rotate(180deg);
}

.scrollbar .icon {
    width: 9px;
    height: 9px;
}

.thumb {
    flex: 1;
    background: #cacaca;
}

.dock-tabs {
    display: flex;
    flex-direction: column;
    align-items: flex-end;
    gap: 9px;
    width: 16px;
    padding-top: 3px;
}

.dock-tabs button {
    display: flex;
    align-items: center;
    gap: 2px;
    width: 13px;
    padding: 1px 0 3px;
    border: 1px solid #b0b0b0;
    border-right: none;
    border-radius: 2px 0 0 2px;
    background: #f0f0f0;
    color: #777;
    writing-mode: vertical-rl;
}
```
